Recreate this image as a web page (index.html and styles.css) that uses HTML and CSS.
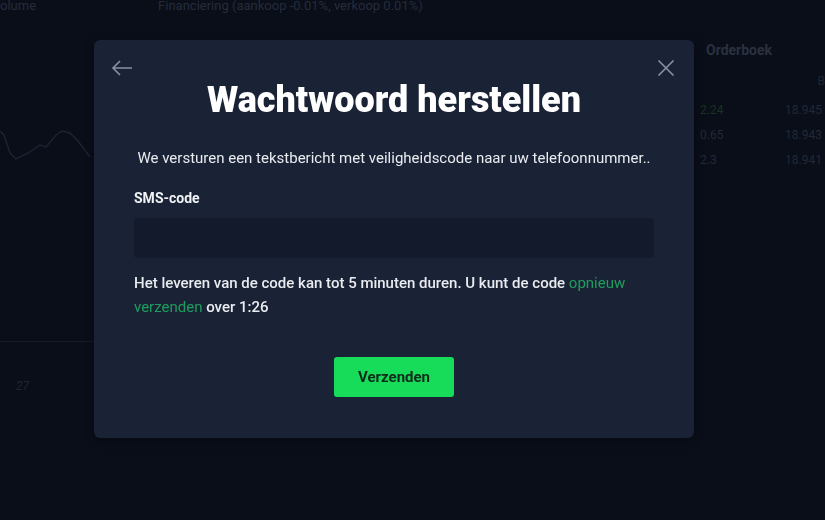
FILE: index.html
```html
<!DOCTYPE html>
<html>
  <head>
    <title>Wachtwoord herstellen</title>
    <link rel="stylesheet" href="styles.css">
  </head>
  <body>
    <div class="page">
      <div class="topbar">
        <span class="top-vol">olume</span>
        <span class="top-fin">Financiering (aankoop -0.01%, verkoop 0.01%)</span>
      </div>
      <div class="main">
        <div class="chart">
          <svg class="chart-line" width="100" height="80" viewBox="0 0 100 80">
            <polyline points="0,14 4,18 10,36 16,42 28,36 40,28 46,30 56,18 62,14 70,16 78,24 90,40" fill="none" stroke="#1c2332" stroke-width="1.4"/>
          </svg>
          <div class="chart-axis"></div>
          <div class="chart-num">27</div>
        </div>
        <div class="book">
          <div class="book-title">Orderboek</div>
          <div class="book-head">B</div>
          <div class="book-row"><span class="buy">2.24</span><span>18.945</span></div>
          <div class="book-row"><span>0.65</span><span>18.943</span></div>
          <div class="book-row"><span>2.3</span><span>18.941</span></div>
        </div>
      </div>
    </div>

    <div class="overlay">
      <div class="modal">
        <div class="modal-top">
          <button class="icon-btn">
            <svg width="22" height="16" viewBox="0 0 22 16"><path d="M21 8H2M9 1L2 8l7 7" fill="none" stroke="#8891a5" stroke-width="1.6"/></svg>
          </button>
          <button class="icon-btn">
            <svg width="18" height="18" viewBox="0 0 18 18"><path d="M1.5 1.5l15 15M16.5 1.5l-15 15" fill="none" stroke="#8891a5" stroke-width="1.6"/></svg>
          </button>
        </div>
        <h1 class="modal-title">Wachtwoord herstellen</h1>
        <p class="modal-sub">We versturen een tekstbericht met veiligheidscode naar uw telefoonnummer..</p>
        <label class="field-label" for="sms">SMS-code</label>
        <input id="sms" class="field-input" autocomplete="off">
        <p class="hint">Het leveren van de code kan tot 5 minuten duren. U kunt de code <a class="resend">opnieuw verzenden</a> over 1:26</p>
        <div class="actions">
          <button class="send-btn">Verzenden</button>
        </div>
      </div>
    </div>
  </body>
</html>
```

FILE: styles.css
```css
body { margin: 0; background: #0a0e19; font-family: Roboto, "Liberation Sans", Arial, sans-serif; color: #e9ebef; height: 520px; overflow: hidden; }

/* dimmed page behind the dialog */
.page { height: 520px; display: flex; flex-direction: column; color: #232a38; font-size: 13px; }
.topbar { height: 14px; display: flex; gap: 122px; line-height: 12px; font-size: 13px; color: #252c3b; }
.main { flex: 1; display: grid; grid-template-columns: 697px 1fr; }
.chart { display: flex; flex-direction: column; padding-top: 103px; }
.chart-line { display: block; }
.chart-axis { margin-top: 144px; height: 1px; width: 94px; background: #141a26; }
.chart-num { margin: 37px 0 0 16px; font-size: 12px; font-style: italic; color: #1f2533; }
.book { padding: 28px 0 0 9px; }
.book-title { font-size: 14px; font-weight: 700; color: #2a3140; height: 32px; }
.book-head { text-align: right; font-size: 12px; color: #1f2533; height: 24px; }
.book-row { display: flex; gap: 47px; height: 25px; line-height: 25px; font-size: 12px; color: #222937; }
.book-row span:first-child { width: 38px; margin-left: -6px; }
.book-row .buy { color: #14351f; }

/* dialog */
.overlay { position: fixed; inset: 0; display: flex; align-items: flex-start; padding: 40px 0 0 94px; }
.modal { width: 600px; height: 398px; box-sizing: border-box; background: #1a2336; border-radius: 6px; padding: 0 40px; box-shadow: 0 2px 8px rgba(0, 0, 0, 0.4); display: flex; flex-direction: column; }
.modal-top { display: flex; justify-content: space-between; margin: 16px -21px 0 -23px; height: 24px; }
.icon-btn { background: none; border: none; padding: 0; height: 24px; display: flex; align-items: center; cursor: pointer; }
.modal-title { margin: 0; font-size: 36px; font-weight: 900; color: #ffffff; text-align: center; line-height: 44px; margin-top: -2px; }
.modal-sub { margin: 24px 0 0; font-size: 15px; text-align: center; line-height: 24px; }
.field-label { margin-top: 18px; font-size: 14px; font-weight: 700; line-height: 20px; color: #f0f2f5; }
.field-input { margin-top: 10px; height: 40px; border: none; border-radius: 4px; background: #131a2b; box-sizing: border-box; padding: 0 12px; color: #fff; font: inherit; outline: none; }
.hint { margin: 13px 0 0; font-size: 15px; line-height: 24px; font-weight: 500; }
.resend { color: #1e9e5c; font-weight: 400; cursor: pointer; }
.actions { display: flex; justify-content: center; margin-top: 38px; }
.send-btn { width: 120px; height: 40px; border: none; border-radius: 3px; background: #16dc5a; color: #0e2a1a; font-family: inherit; font-size: 15px; font-weight: 700; cursor: pointer; }
```
